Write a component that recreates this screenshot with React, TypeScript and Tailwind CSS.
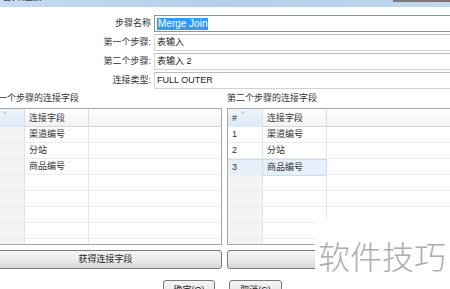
import React from 'react';

const font = "font-['Liberation_Sans','Noto_Sans_CJK_SC',sans-serif]";

function Field({ label, children, focused }: { label: string; children: React.ReactNode; focused?: boolean }) {
  return (
    <div className="flex items-center h-[17px]">
      <div className="w-[151px] shrink-0 text-right text-[9px] leading-[17px] text-[#333]">{label}</div>
      <div
        className={`ml-[3px] w-[310px] shrink-0 h-[17px] border bg-white flex items-center pl-[2px] text-[#222] ${
          focused ? 'border-[#7b9bb3]' : 'border-[#cfd3d7] border-t-[#b9bcc0]'
        }`}
      >
        {children}
      </div>
    </div>
  );
}

type Row = { num?: string; name?: string; selected?: boolean };

function JoinTable({ rows, showNums }: { rows: Row[]; showNums: boolean }) {
  const all: Row[] = [...rows];
  while (all.length < 8) all.push({});
  return (
    <div className="h-[137px] border border-[#a7a7a7] bg-white overflow-hidden">
      {/* header */}
      <div className="grid grid-cols-[35px_64px_1fr] h-[18px] border-b border-[#d5d5d5] bg-gradient-to-b from-white to-[#f1f2f4]">
        <div className="relative border-r border-[#d9dde2] bg-gradient-to-b from-[#eef5fc] to-[#dce9f6] text-[9px] leading-[18px] pl-[4px] text-[#333]">
          {showNums ? '#' : ''}
          <span className="absolute left-[13px] top-[-4px] text-[7px] text-[#9aa4ad]">^</span>
        </div>
        <div className="border-r border-[#dcdcdc] text-[9px] leading-[18px] pl-[4px] text-[#333]">连接字段</div>
        <div />
      </div>
      {all.map((r, i) => (
        <div key={i} className="grid grid-cols-[35px_64px_1fr] h-[16px] border-b border-[#ececec]">
          <div
            className={`border-r text-[9px] leading-[15px] pl-[4px] text-[#333] ${
              r.selected
                ? 'bg-[#e6f0fa] border-[#c9dcef] border-y'
                : r.num
                  ? 'bg-white border-[#e2e2e2]'
                  : 'bg-[#f4f4f4] border-[#e2e2e2]'
            }`}
          >
            {r.num}
          </div>
          <div
            className={`border-r text-[9px] leading-[15px] pl-[4px] text-[#333] ${
              r.selected ? 'bg-[#e6f0fa] border-[#c9dcef] border-y' : 'border-[#e6e6e6]'
            }`}
          >
            {r.name}
          </div>
          <div />
        </div>
      ))}
    </div>
  );
}

function WinButton({ children, className = '' }: { children?: React.ReactNode; className?: string }) {
  return (
    <div
      className={`h-[19px] rounded-[3px] border border-[#7a7a7a] bg-gradient-to-b from-[#f4f4f4] via-[#ebebeb] to-[#d7d7d7] flex items-center justify-center text-[9px] text-[#222] ${className}`}
    >
      {children}
    </div>
  );
}

export default function App() {
  return (
    <div className={`relative w-[450px] h-[289px] overflow-hidden bg-white ${font}`}>
      {/* Title bar */}
      <div className="relative h-[7px] overflow-hidden bg-gradient-to-r from-[#c6dcf1] via-[#b3cfea] to-[#c0d8ef]">
        <div className="absolute left-[2px] top-[-11px] text-[10px] text-[#3a4656]">合并连接</div>
        <div className="absolute left-[393px] top-0 w-[60px] h-[2px] bg-gradient-to-r from-[#7d7b80] to-[#8a6d6b]" />
      </div>

      {/* Form */}
      <div className="pt-[8px] flex flex-col gap-[2px]">
        <Field label="步骤名称" focused>
          <span className="bg-[#3399ff] text-white text-[10px] leading-[12px] px-[1px]">Merge Join</span>
        </Field>
        <Field label="第一个步骤:">
          <span className="text-[9px]">表输入</span>
        </Field>
        <Field label="第二个步骤:">
          <span className="text-[9px]">表输入 2</span>
        </Field>
        <Field label="连接类型:">
          <span className="text-[9px]">FULL OUTER</span>
        </Field>
      </div>

      {/* Panels */}
      <div className="mt-[2px] flex gap-[5px]">
        <div className="-ml-[11px] w-[233px] shrink-0">
          <div className="h-[14px] text-[9px] leading-[14px] text-[#333]">第一个步骤的连接字段</div>
          <div className="mt-[3px]">
            <JoinTable showNums={false} rows={[{ name: '渠道编号' }, { name: '分站' }, { name: '商品编号' }]} />
          </div>
          <WinButton className="mt-[5px]">获得连接字段</WinButton>
        </div>
        <div className="w-[240px] shrink-0">
          <div className="h-[14px] text-[9px] leading-[14px] text-[#333]">第二个步骤的连接字段</div>
          <div className="mt-[3px]">
            <JoinTable
              showNums
              rows={[
                { num: '1', name: '渠道编号' },
                { num: '2', name: '分站' },
                { num: '3', name: '商品编号', selected: true },
              ]}
            />
          </div>
          <WinButton className="mt-[5px]" />
        </div>
      </div>

      {/* OK / Cancel */}
      <div className="mt-[11px] flex gap-[14px] pl-[163px]">
        <WinButton className="w-[52px] items-start pt-[3px]">确定(O)</WinButton>
        <WinButton className="w-[53px] items-start pt-[3px]">取消(C)</WinButton>
      </div>

      {/* Watermark */}
      <div className="absolute left-[315px] top-[218px] w-[135px] h-[60px] bg-white flex items-end pb-[5px] pl-[3px]">
        <span className="text-[32px] leading-[36px] text-[#adadad] font-['Noto_Sans_CJK_SC',sans-serif] font-light">
          软件技巧
        </span>
      </div>
    </div>
  );
}
